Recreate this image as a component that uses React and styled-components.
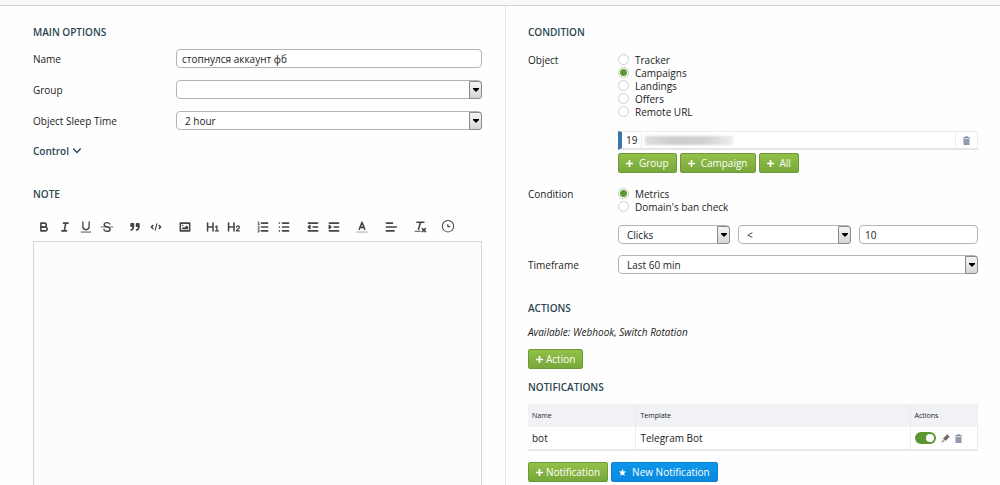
import React, { useState } from "react";
import styled, { createGlobalStyle, css } from "styled-components";

const App = () => {
  const [name, setName] = useState("стопнулся аккаунт фб");
  const [object, setObject] = useState("Campaigns");
  const [condition, setCondition] = useState("Metrics");
  const [value, setValue] = useState("10");
  const [enabled, setEnabled] = useState(true);

  return (
    <>
      <GlobalStyle />
      <StTopBar />
      <StPage>
        <StLeft>
          <StTitle>MAIN OPTIONS</StTitle>
          <StFields>
            <StField>
              <label htmlFor="name">Name</label>
              <StInput
                id="name"
                value={name}
                onChange={(e) => setName(e.target.value)}
              />
            </StField>
            <StField>
              <label htmlFor="group">Group</label>
              <Select id="group" options={[""]} />
            </StField>
            <StField>
              <label htmlFor="sleep">Object Sleep Time</label>
              <Select id="sleep" options={["2 hour"]} />
            </StField>
          </StFields>
          <StControl type="button">
            Control
            <svg width="8" height="6" viewBox="0 0 8 6">
              <path d="M0.7 1 4 4.6 7.3 1" {...line} strokeWidth="1.4" />
            </svg>
          </StControl>

          <StTitle>NOTE</StTitle>
          <StToolbar>
            {toolGroups.map((group) => (
              <StToolGroup key={group[0]}>
                {group.map((tool) => (
                  <StTool key={tool} type="button" aria-label={tool}>
                    <svg width="14" height="14" viewBox="0 0 18 18">
                      <g {...line} strokeWidth="2">
                        {tools[tool]}
                      </g>
                    </svg>
                  </StTool>
                ))}
              </StToolGroup>
            ))}
          </StToolbar>
          <StEditor aria-label="Note" />
        </StLeft>

        <StRight>
          <StTitle>CONDITION</StTitle>
          <StSection>
            <span id="object">Object</span>
            <div>
              <StRadios role="radiogroup" aria-labelledby="object">
                {objects.map((item) => (
                  <StRadio key={item}>
                    <input
                      type="radio"
                      name="object"
                      checked={object === item}
                      onChange={() => setObject(item)}
                    />
                    {item}
                  </StRadio>
                ))}
              </StRadios>
              <StCampaign>
                <StCampaignId>19</StCampaignId>
                <StCampaignName>
                  <StHidden />
                </StCampaignName>
                <StCampaignDelete>
                  <StIconButton type="button" aria-label="Delete">
                    <Trash />
                  </StIconButton>
                </StCampaignDelete>
              </StCampaign>
              <StButtons>
                <StButton type="button" $wide>
                  <Plus />
                  Group
                </StButton>
                <StButton type="button" $wide>
                  <Plus />
                  Campaign
                </StButton>
                <StButton type="button" $wide>
                  <Plus />
                  All
                </StButton>
              </StButtons>
            </div>
          </StSection>

          <StSection>
            <span id="condition">Condition</span>
            <div>
              <StRadios role="radiogroup" aria-labelledby="condition">
                {conditions.map((item) => (
                  <StRadio key={item}>
                    <input
                      type="radio"
                      name="condition"
                      checked={condition === item}
                      onChange={() => setCondition(item)}
                    />
                    {item}
                  </StRadio>
                ))}
              </StRadios>
              <StRule>
                <Select aria-label="Metric" options={["Clicks"]} />
                <Select aria-label="Operator" options={["<"]} />
                <StInput
                  aria-label="Value"
                  value={value}
                  onChange={(e) => setValue(e.target.value)}
                />
              </StRule>
            </div>
          </StSection>

          <StTimeframe>
            <label htmlFor="timeframe">Timeframe</label>
            <Select id="timeframe" options={["Last 60 min"]} />
          </StTimeframe>

          <StTitle>ACTIONS</StTitle>
          <StHint>Available: Webhook, Switch Rotation</StHint>
          <StButtons>
            <StButton type="button">
              <Plus />
              Action
            </StButton>
          </StButtons>

          <StNotifications>NOTIFICATIONS</StNotifications>
          <StTable>
            <thead>
              <tr>
                <th>Name</th>
                <th>Template</th>
                <th>Actions</th>
              </tr>
            </thead>
            <tbody>
              <tr>
                <td>bot</td>
                <td>Telegram Bot</td>
                <td>
                  <StActions>
                    <StSwitch
                      type="checkbox"
                      role="switch"
                      aria-label="Enabled"
                      checked={enabled}
                      onChange={() => setEnabled(!enabled)}
                    />
                    <StIconButton type="button" aria-label="Edit">
                      <Pencil />
                    </StIconButton>
                    <StIconButton type="button" aria-label="Delete">
                      <Trash />
                    </StIconButton>
                  </StActions>
                </td>
              </tr>
            </tbody>
          </StTable>
          <StButtons>
            <StButton type="button">
              <Plus />
              Notification
            </StButton>
            <StButton type="button" $blue $wide>
              <Star />
              New Notification
            </StButton>
          </StButtons>
        </StRight>
      </StPage>
    </>
  );
};

export default App;

const objects = ["Tracker", "Campaigns", "Landings", "Offers", "Remote URL"];
const conditions = ["Metrics", "Domain's ban check"];

const line = {
  fill: "none",
  stroke: "currentColor",
  strokeLinecap: "round",
  strokeLinejoin: "round",
};

const toolGroups = [
  ["Bold", "Italic", "Underline", "Strike"],
  ["Quote", "Code"],
  ["Image"],
  ["Heading 1", "Heading 2"],
  ["Ordered list", "Bullet list"],
  ["Outdent", "Indent"],
  ["Color"],
  ["Align"],
  ["Clear format"],
  ["History"],
];

const tools = {
  Bold: (
    <>
      <path d="M5 4h4.5a2.5 2.5 0 0 1 0 5H5z" />
      <path d="M5 9h5.5a2.5 2.5 0 0 1 0 5H5z" />
    </>
  ),
  Italic: <path d="M7 4h6M5 14h6M8 14l2-10" />,
  Underline: (
    <>
      <path d="M5 2.500v6a4 4 0 0 0 8 0v-6" strokeWidth="1.700" />
      <path d="M3 15.500h12" strokeWidth="1.200" />
    </>
  ),
  Strike: (
    <>
      <path
        d="M12.600 5.200C12 4 10.700 3.400 9 3.400c-2.200 0-3.600 1-3.600 2.600 0 1.500 1.300 2.200 3.600 2.800 2.500.6 3.900 1.400 3.900 3 0 1.800-1.600 2.800-3.900 2.800-2 0-3.400-.8-4-2.200"
        strokeWidth="1.800"
      />
      <path d="M1.500 9h15" strokeWidth="1" />
    </>
  ),
  Quote: (
    <>
      <path d="M4 5h3v3H4zM11 5h3v3h-3z" fill="currentColor" />
      <path d="M7 8c0 4-3 5-3 5M14 8c0 4-3 5-3 5" />
    </>
  ),
  Code: (
    <>
      <path d="M5 7 3 9l2 2M13 7l2 2-2 2" />
      <path d="m10 5-2 8" strokeWidth="1.500" />
    </>
  ),
  Image: (
    <>
      <path d="M3 4h12v10H3z" />
      <circle cx="6" cy="7" r="1" fill="currentColor" stroke="none" />
      <path
        d="M5 12v-1l2-2 1 1 3-3 2 2v3z"
        fill="currentColor"
        stroke="none"
      />
    </>
  ),
  "Heading 1": (
    <>
      <path d="M2 4v10M9 4v10M2 9h7" />
      <path d="m12.300 9 1.700-1.300V14M12 14h4" strokeWidth="1.700" />
    </>
  ),
  "Heading 2": (
    <>
      <path d="M2 4v10M9 4v10M2 9h7" />
      <path
        d="M12.200 9c.2-1 .9-1.400 1.800-1.400 1.100 0 1.900.6 1.900 1.600 0 1.700-3.700 3-3.700 4.800H16"
        strokeWidth="1.700"
      />
    </>
  ),
  "Ordered list": (
    <>
      <path d="M7 4h8M7 9h8M7 14h8" />
      <path
        d="M2.500 2.500h1v3M2.500 5.500h2M2.500 7.800h1.500v1L2.500 10.500h2M2.500 12.500h1.500v3H2.500M3 14h1"
        strokeWidth="1"
      />
    </>
  ),
  "Bullet list": <path d="M7 4h8M7 9h8M7 14h8M3 4h0M3 9h0M3 14h0" />,
  Outdent: (
    <>
      <path d="M3 14h12M3 4h12M9 9h6" />
      <path d="M5 7v4L3 9z" fill="currentColor" />
    </>
  ),
  Indent: (
    <>
      <path d="M3 14h12M3 4h12M9 9h6" />
      <path d="M3 7v4l2-2z" fill="currentColor" />
    </>
  ),
  Color: (
    <>
      <path d="m5.500 12 3.500-9 3.500 9M6.500 9.500h5" />
      <path d="M2.500 15.500h13" strokeWidth="1.200" opacity="0.500" />
    </>
  ),
  Align: <path d="M3 4h8M3 9h13M3 14h10" />,
  "Clear format": (
    <>
      <path d="M5 3h9M7 12l2.800-9M12 11l4 4M16 11l-4 4" />
      <path d="M2.500 14.500h7" strokeWidth="1.200" />
    </>
  ),
  History: (
    <>
      <circle cx="9" cy="8" r="7.300" strokeWidth="1.300" />
      <path d="M8.800 5.800v2.700h2.700" strokeWidth="1.400" />
    </>
  ),
};

const Select = ({ options, ...props }) => (
  <StSelectBox>
    <StSelect {...props}>
      {options.map((option) => (
        <option key={option}>{option}</option>
      ))}
    </StSelect>
    <StArrow aria-hidden="true">
      <svg width="6" height="4" viewBox="0 0 6 4">
        <path d="M0 0h6v1L3 4 0 1z" fill="#000" />
      </svg>
    </StArrow>
  </StSelectBox>
);

const Plus = () => (
  <svg width="7" height="7" viewBox="0 0 7 7">
    <path d="M3.500 0v7M0 3.500h7" stroke="#fff" strokeWidth="1.600" />
  </svg>
);

const Star = () => (
  <svg width="7" height="7" viewBox="0 0 10 10">
    <path
      d="m5 0 1.500 3.300 3.500.4-2.600 2.400.7 3.600L5 7.900 1.900 9.700l.7-3.600L0 3.700l3.500-.4z"
      fill="#fff"
    />
  </svg>
);

const Trash = () => (
  <svg width="7" height="9" viewBox="0 0 8 10">
    <path d="M0 1.200h2.500V0h3v1.200H8v1.200H0z" fill="#848da0" />
    <path d="M.8 3h6.400v7H.8z" fill="#a4acbc" />
    <path
      d="M1.200 3v6.600h5.600V3M3.100 3.500v5.500M4.900 3.500v5.500"
      fill="none"
      stroke="#7d879b"
      strokeWidth="0.800"
    />
  </svg>
);

const Pencil = () => (
  <svg width="9" height="9" viewBox="0 0 9 9">
    <path d="M6.200.2 8.800 2.800 4.600 7 2 4.400z" fill="#707070" />
    <path d="M1.500 5.200 3.800 7.500.3 8.700z" fill="#a0a0a0" />
  </svg>
);

const GlobalStyle = createGlobalStyle`
  * {
    box-sizing: border-box;
  }
  body {
    margin: 0;
    background: #fefefe;
    color: #222;
    font-family: "Open Sans", "Noto Sans", sans-serif;
    font-size: 10px;
    line-height: 14px;
  }
  button, input, select, textarea {
    font: inherit;
    color: inherit;
    margin: 0;
  }
`;

const StTopBar = styled.header`
  height: 6px;
  background: #f8f8fb;
  border-bottom: 1px solid #d4d5d8;
`;

const StPage = styled.main`
  display: grid;
  grid-template-columns: 506fr 494fr;
  height: calc(100vh - 6px);
  min-height: 479px;
  overflow: hidden;
`;

const StLeft = styled.section`
  display: flex;
  flex-direction: column;
  align-items: stretch;
  padding: 18px 23px 0 33px;
  border-right: 1px solid #e3e5ea;
`;

const StRight = styled.section`
  padding: 18px 22px 0 22px;
`;

const StTitle = styled.h2`
  margin: 0;
  font-size: 10px;
  font-weight: 600;
  line-height: 16px;
  color: #2b4650;
`;

const StNotifications = styled(StTitle)`
  margin: 10px 0 9px;
`;

const StFields = styled.div`
  display: grid;
  gap: 12px;
  margin-top: 9px;
`;

const StField = styled.div`
  display: grid;
  grid-template-columns: 143px 1fr;
  align-items: center;
`;

const boxStyle = css`
  width: 100%;
  height: 19px;
  border: 1px solid #b4b4b4;
  border-radius: 4px;
  background: #fff;
`;

const StInput = styled.input`
  ${boxStyle}
  padding: 0 5px;
`;

const StSelectBox = styled.div`
  display: flex;
  position: relative;
`;

const StSelect = styled.select`
  ${boxStyle}
  padding: 0 18px 0 8px;
  appearance: none;
`;

const StArrow = styled.span`
  position: absolute;
  top: 1px;
  right: 0;
  bottom: 0;
  width: 13px;
  display: flex;
  align-items: center;
  justify-content: center;
  border: 1px solid #8a8a8a;
  border-radius: 0 3px 3px 0;
  background: linear-gradient(#f4f4f4, #d6d6d6);
  pointer-events: none;
`;

const StControl = styled.button`
  display: flex;
  align-items: center;
  align-self: flex-start;
  gap: 4px;
  margin: 14px 0 28px;
  padding: 0;
  border: 0;
  background: none;
  font-weight: 600;
  color: #2b4650;
`;

const StToolbar = styled.div`
  display: flex;
  justify-content: space-between;
  max-width: 426px;
  margin: 16px 0 5px;
`;

const StToolGroup = styled.div`
  display: flex;
`;

const StTool = styled.button`
  display: flex;
  align-items: center;
  justify-content: center;
  width: 21px;
  height: 18px;
  padding: 0;
  border: 0;
  background: none;
  color: #444;
`;

const StEditor = styled.textarea`
  flex: 1;
  width: 100%;
  border: 1px solid #d4d4d4;
  border-bottom: 0;
  background: #fcfcfa;
  resize: none;
`;

const StSection = styled.div`
  display: grid;
  grid-template-columns: 90px 1fr;
  margin-top: 13px;

  & + & {
    margin-top: 14px;
  }
`;

const StRadios = styled.div`
  display: grid;
  justify-items: start;
  grid-auto-rows: 13px;
`;

const StRadio = styled.label`
  display: flex;
  align-items: center;
  gap: 6px;

  input {
    appearance: none;
    width: 11px;
    height: 11px;
    border: 1px solid #cfcfcf;
    border-radius: 50%;
    background: #fff;
  }
  input:checked {
    border-color: #b8cfa8;
    background: radial-gradient(circle, #5f9632 0 3px, #fff 4px);
  }
`;

const StCampaign = styled.div`
  display: flex;
  align-items: stretch;
  height: 19px;
  margin-top: 13px;
  border: 1px solid #ececee;
  border-left: 4px solid #3a75b0;
  border-bottom: 2px solid #e4e5e8;
  background: #fff;
`;

const StCampaignId = styled.span`
  padding: 0 4px;
  line-height: 17px;
`;

const StCampaignName = styled.span`
  display: flex;
  flex: 1;
  align-items: center;
  padding: 0 3px;
  border-left: 1px solid #ececee;
`;

const StHidden = styled.span`
  width: 88px;
  height: 9px;
  background: linear-gradient(90deg, #ddd, #cdcdcd 35%, #d2d2d2 70%, #eee);
  filter: blur(1px);
`;

const StCampaignDelete = styled.span`
  display: flex;
  align-items: center;
  justify-content: center;
  width: 22px;
  border-left: 1px solid #ececee;
`;

const StIconButton = styled.button`
  display: flex;
  padding: 0;
  border: 0;
  background: none;
`;

const StButtons = styled.div`
  display: flex;
  gap: 3px;
  margin-top: 3px;
`;

const StButton = styled.button`
  display: inline-flex;
  align-items: center;
  gap: ${(props) => (props.$wide ? "6px" : "3px")};
  height: 20px;
  padding: 0 7px;
  border: 1px solid ${(props) => (props.$blue ? "#0a7fd0" : "#6d9a38")};
  border-radius: 2px;
  background: ${(props) =>
    props.$blue
      ? "linear-gradient(#0b96ea, #0a8ade)"
      : "linear-gradient(#92c047, #78a83c)"};
  color: #fff;
`;

const StRule = styled.div`
  display: grid;
  grid-template-columns: 112fr 113fr 119fr;
  gap: 8px;
  margin-top: 12px;
`;

const StTimeframe = styled.div`
  display: grid;
  grid-template-columns: 90px 1fr;
  align-items: center;
  margin: 11px 0 26px;
`;

const StHint = styled.p`
  margin: 9px 0 10px;
  font-style: italic;
`;

const StTable = styled.table`
  width: 100%;
  margin-bottom: 11px;
  border-collapse: collapse;
  table-layout: fixed;
  background: #fff;
  border-bottom: 2px solid #e6e7ea;

  th, td {
    padding: 0 4px;
    height: 23px;
    text-align: left;
    border-right: 1px solid #ebecef;
  }
  th {
    background: #f1f2f5;
    font-size: 7px;
    font-weight: 400;
  }
  th:nth-child(1) {
    width: 24%;
  }
  th:nth-child(3) {
    width: 15%;
  }
`;

const StActions = styled.div`
  display: flex;
  align-items: center;
  gap: 5px;
`;

const StSwitch = styled.input`
  appearance: none;
  display: flex;
  width: 21px;
  height: 12px;
  padding: 2px;
  border-radius: 6px;
  background: ${(props) => (props.checked ? "#5c9632" : "#bbb")};

  &::before {
    content: "";
    width: 8px;
    height: 8px;
    margin-left: ${(props) => (props.checked ? "auto" : "0")};
    border-radius: 50%;
    background: #fff;
  }
`;
